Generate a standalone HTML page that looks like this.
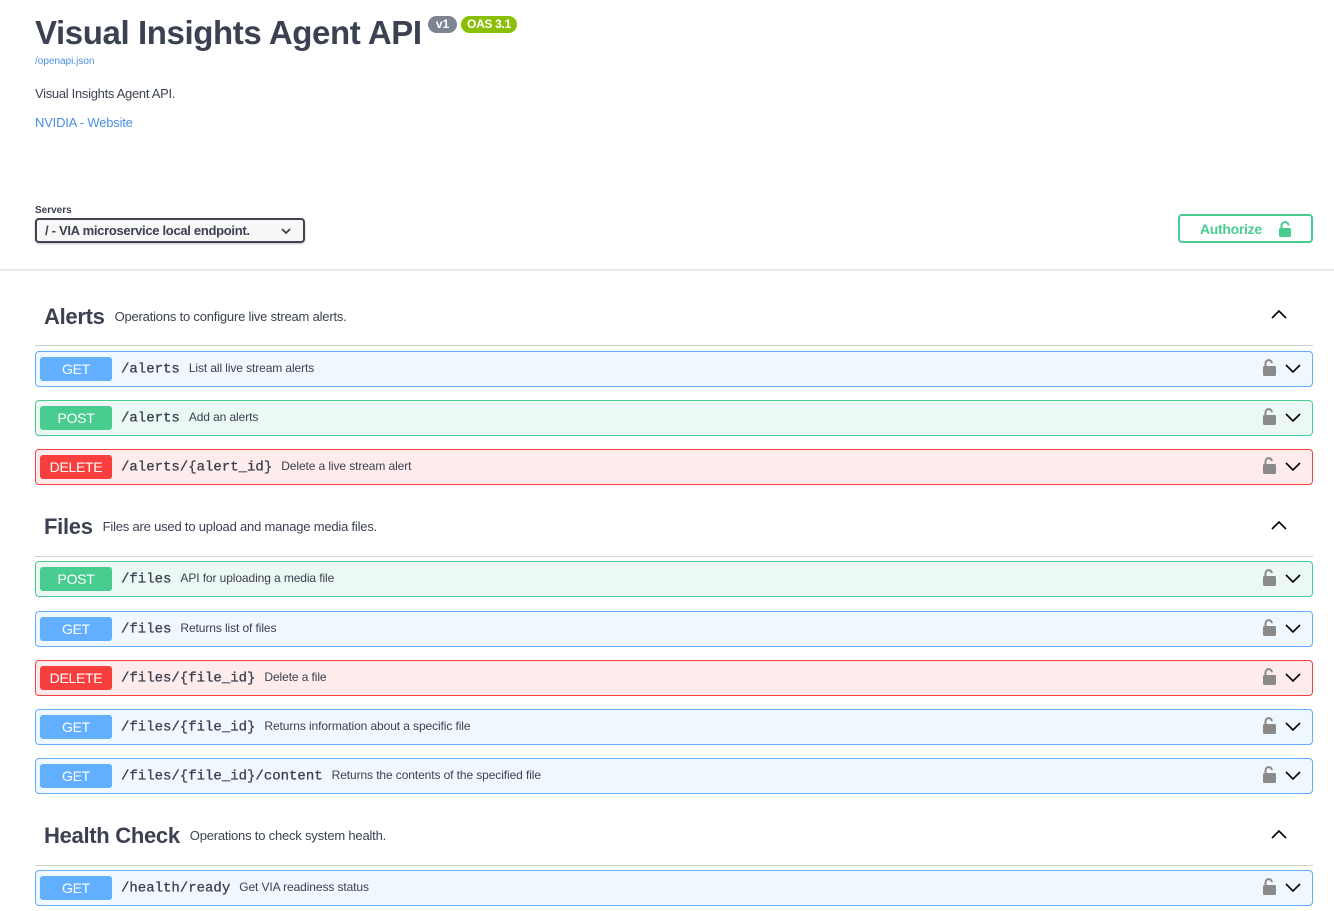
<!DOCTYPE html>
<html><head><meta charset="utf-8"><style>
*{box-sizing:border-box;margin:0;padding:0}
body{width:1334px;height:911px;overflow:hidden;background:#fff;font-family:"Liberation Sans",sans-serif;color:#3b4151;position:relative}
.a{position:absolute}
.title{left:35px;top:14px;font-size:33px;font-weight:bold;color:#3b4151;letter-spacing:-0.4px}
.badge{top:16px;height:17px;border-radius:9px;color:#fff;font-size:12px;font-weight:bold;line-height:17px;text-align:center}
.link{color:#4990e2;text-decoration:none}
.hr{left:0;width:1334px;top:269px;height:2px;background:#e8e8e8}
.tag{left:35px;width:1278px;height:1px;background:#d0d0d0}
.tagt{left:44px;font-size:22px;font-weight:bold;color:#3b4151;letter-spacing:-0.3px}
.tagt span{font-size:13px;font-weight:normal;margin-left:10px;vertical-align:3px;letter-spacing:-0.2px}
.op{left:35px;width:1278px;height:36px;border:1px solid;border-radius:4px}
.get{background:#eff7ff;border-color:#61affe}
.post{background:#ebf8f3;border-color:#49cc90}
.del{background:#feebeb;border-color:#f93e3e}
.m{position:absolute;left:4px;top:5px;width:72px;height:24px;border-radius:3px;color:#fff;font-size:14px;text-align:center;line-height:24px;letter-spacing:-0.3px}
.get .m{background:#61affe}.post .m{background:#49cc90}.del .m{background:#f93e3e}
.p{position:absolute;left:85px;top:9px;font-family:"Liberation Mono",monospace;font-size:14px;color:#3b4151;white-space:nowrap;-webkit-text-stroke:0.3px #3b4151}
.p span{font-family:"Liberation Sans",sans-serif;font-size:12px;-webkit-text-stroke:0;margin-left:9px;letter-spacing:-0.1px;vertical-align:0.5px}
.ic{position:absolute;left:1226px;top:7px}
</style></head><body>
<div class="a title">Visual Insights Agent API</div>
<div class="a badge" style="left:428px;width:29px;background:#7d8492">v1</div>
<div class="a badge" style="left:461px;width:56px;background:#89bf04;letter-spacing:-0.3px">OAS 3.1</div>
<div class="a" style="left:35px;top:56px;font-size:10px"><a class="link">/openapi.json</a></div>
<div class="a" style="left:35px;top:86px;font-size:13px;letter-spacing:-0.3px">Visual Insights Agent API.</div>
<div class="a" style="left:35px;top:115px;font-size:13px;letter-spacing:-0.2px"><a class="link">NVIDIA - Website</a></div>
<div class="a" style="left:35px;top:205px;font-size:10px;font-weight:bold">Servers</div>
<div class="a" style="left:35px;top:218px;width:270px;height:25px;border:2px solid #41444e;border-radius:4px;background:#f7f7f7;box-shadow:0 1px 2px rgba(0,0,0,.25);font-size:13px;font-weight:bold;padding:3px 8px;letter-spacing:-0.3px">/ - VIA microservice local endpoint.
<svg class="a" style="left:244px;top:8px" width="10" height="7" viewBox="0 0 10 7"><path d="M1 1l4 4 4-4" stroke="#3b4151" stroke-width="1.8" fill="none"/></svg></div>
<div class="a" style="left:1178px;top:214px;width:135px;height:29px;border:2px solid #49cc90;border-radius:4px;color:#49cc90;font-size:14px;font-weight:bold;padding:5px 0 0 20px;letter-spacing:-0.3px">Authorize
<svg class="a" style="left:98px;top:5px" width="14" height="17" viewBox="0 0 14 17"><path d="M3.5 7V4.5a3.5 3.5 0 0 1 7 0" stroke="#49cc90" stroke-width="2" fill="none"/><rect x="1" y="7" width="12" height="9" rx="1.5" fill="#49cc90"/></svg></div>
<div class="a hr"></div>

<div class="a tagt" style="top:304px">Alerts<span>Operations to configure live stream alerts.</span></div>
<div class="a tag" style="top:345px"></div>
<div class="a tagt" style="top:514px">Files<span>Files are used to upload and manage media files.</span></div>
<div class="a tag" style="top:556px"></div>
<div class="a tagt" style="top:823px">Health Check<span>Operations to check system health.</span></div>
<div class="a tag" style="top:865px"></div>

<svg class="a" style="left:1271px;top:309px" width="16" height="10"><path d="M1 9l7-7 7 7" stroke="#000" stroke-width="1.6" fill="none"/></svg>
<svg class="a" style="left:1271px;top:520px" width="16" height="10"><path d="M1 9l7-7 7 7" stroke="#000" stroke-width="1.6" fill="none"/></svg>
<svg class="a" style="left:1271px;top:829px" width="16" height="10"><path d="M1 9l7-7 7 7" stroke="#000" stroke-width="1.6" fill="none"/></svg>

<svg width="0" height="0" style="position:absolute"><defs><g id="ic"><path d="M3.5 7V4.3a3.2 3.2 0 0 1 6.4 0" stroke="#8a8a8a" stroke-width="2" fill="none"/><rect x="1" y="7" width="13" height="10" rx="1.5" fill="#8a8a8a"/><path d="M24 6l7 7 7-7" stroke="#000" stroke-width="1.6" fill="none"/></g></defs></svg>

<div class="a op get" style="top:351px"><div class="m">GET</div><div class="p">/alerts<span>List all live stream alerts</span></div><svg class="ic" width="40" height="20"><use href="#ic"/></svg></div>
<div class="a op post" style="top:400px"><div class="m">POST</div><div class="p">/alerts<span>Add an alerts</span></div><svg class="ic" width="40" height="20"><use href="#ic"/></svg></div>
<div class="a op del" style="top:449px"><div class="m">DELETE</div><div class="p">/alerts/{alert_id}<span>Delete a live stream alert</span></div><svg class="ic" width="40" height="20"><use href="#ic"/></svg></div>
<div class="a op post" style="top:561px"><div class="m">POST</div><div class="p">/files<span>API for uploading a media file</span></div><svg class="ic" width="40" height="20"><use href="#ic"/></svg></div>
<div class="a op get" style="top:611px"><div class="m">GET</div><div class="p">/files<span>Returns list of files</span></div><svg class="ic" width="40" height="20"><use href="#ic"/></svg></div>
<div class="a op del" style="top:660px"><div class="m">DELETE</div><div class="p">/files/{file_id}<span>Delete a file</span></div><svg class="ic" width="40" height="20"><use href="#ic"/></svg></div>
<div class="a op get" style="top:709px"><div class="m">GET</div><div class="p">/files/{file_id}<span>Returns information about a specific file</span></div><svg class="ic" width="40" height="20"><use href="#ic"/></svg></div>
<div class="a op get" style="top:758px"><div class="m">GET</div><div class="p">/files/{file_id}/content<span>Returns the contents of the specified file</span></div><svg class="ic" width="40" height="20"><use href="#ic"/></svg></div>
<div class="a op get" style="top:870px"><div class="m">GET</div><div class="p">/health/ready<span>Get VIA readiness status</span></div><svg class="ic" width="40" height="20"><use href="#ic"/></svg></div>
</body></html>
